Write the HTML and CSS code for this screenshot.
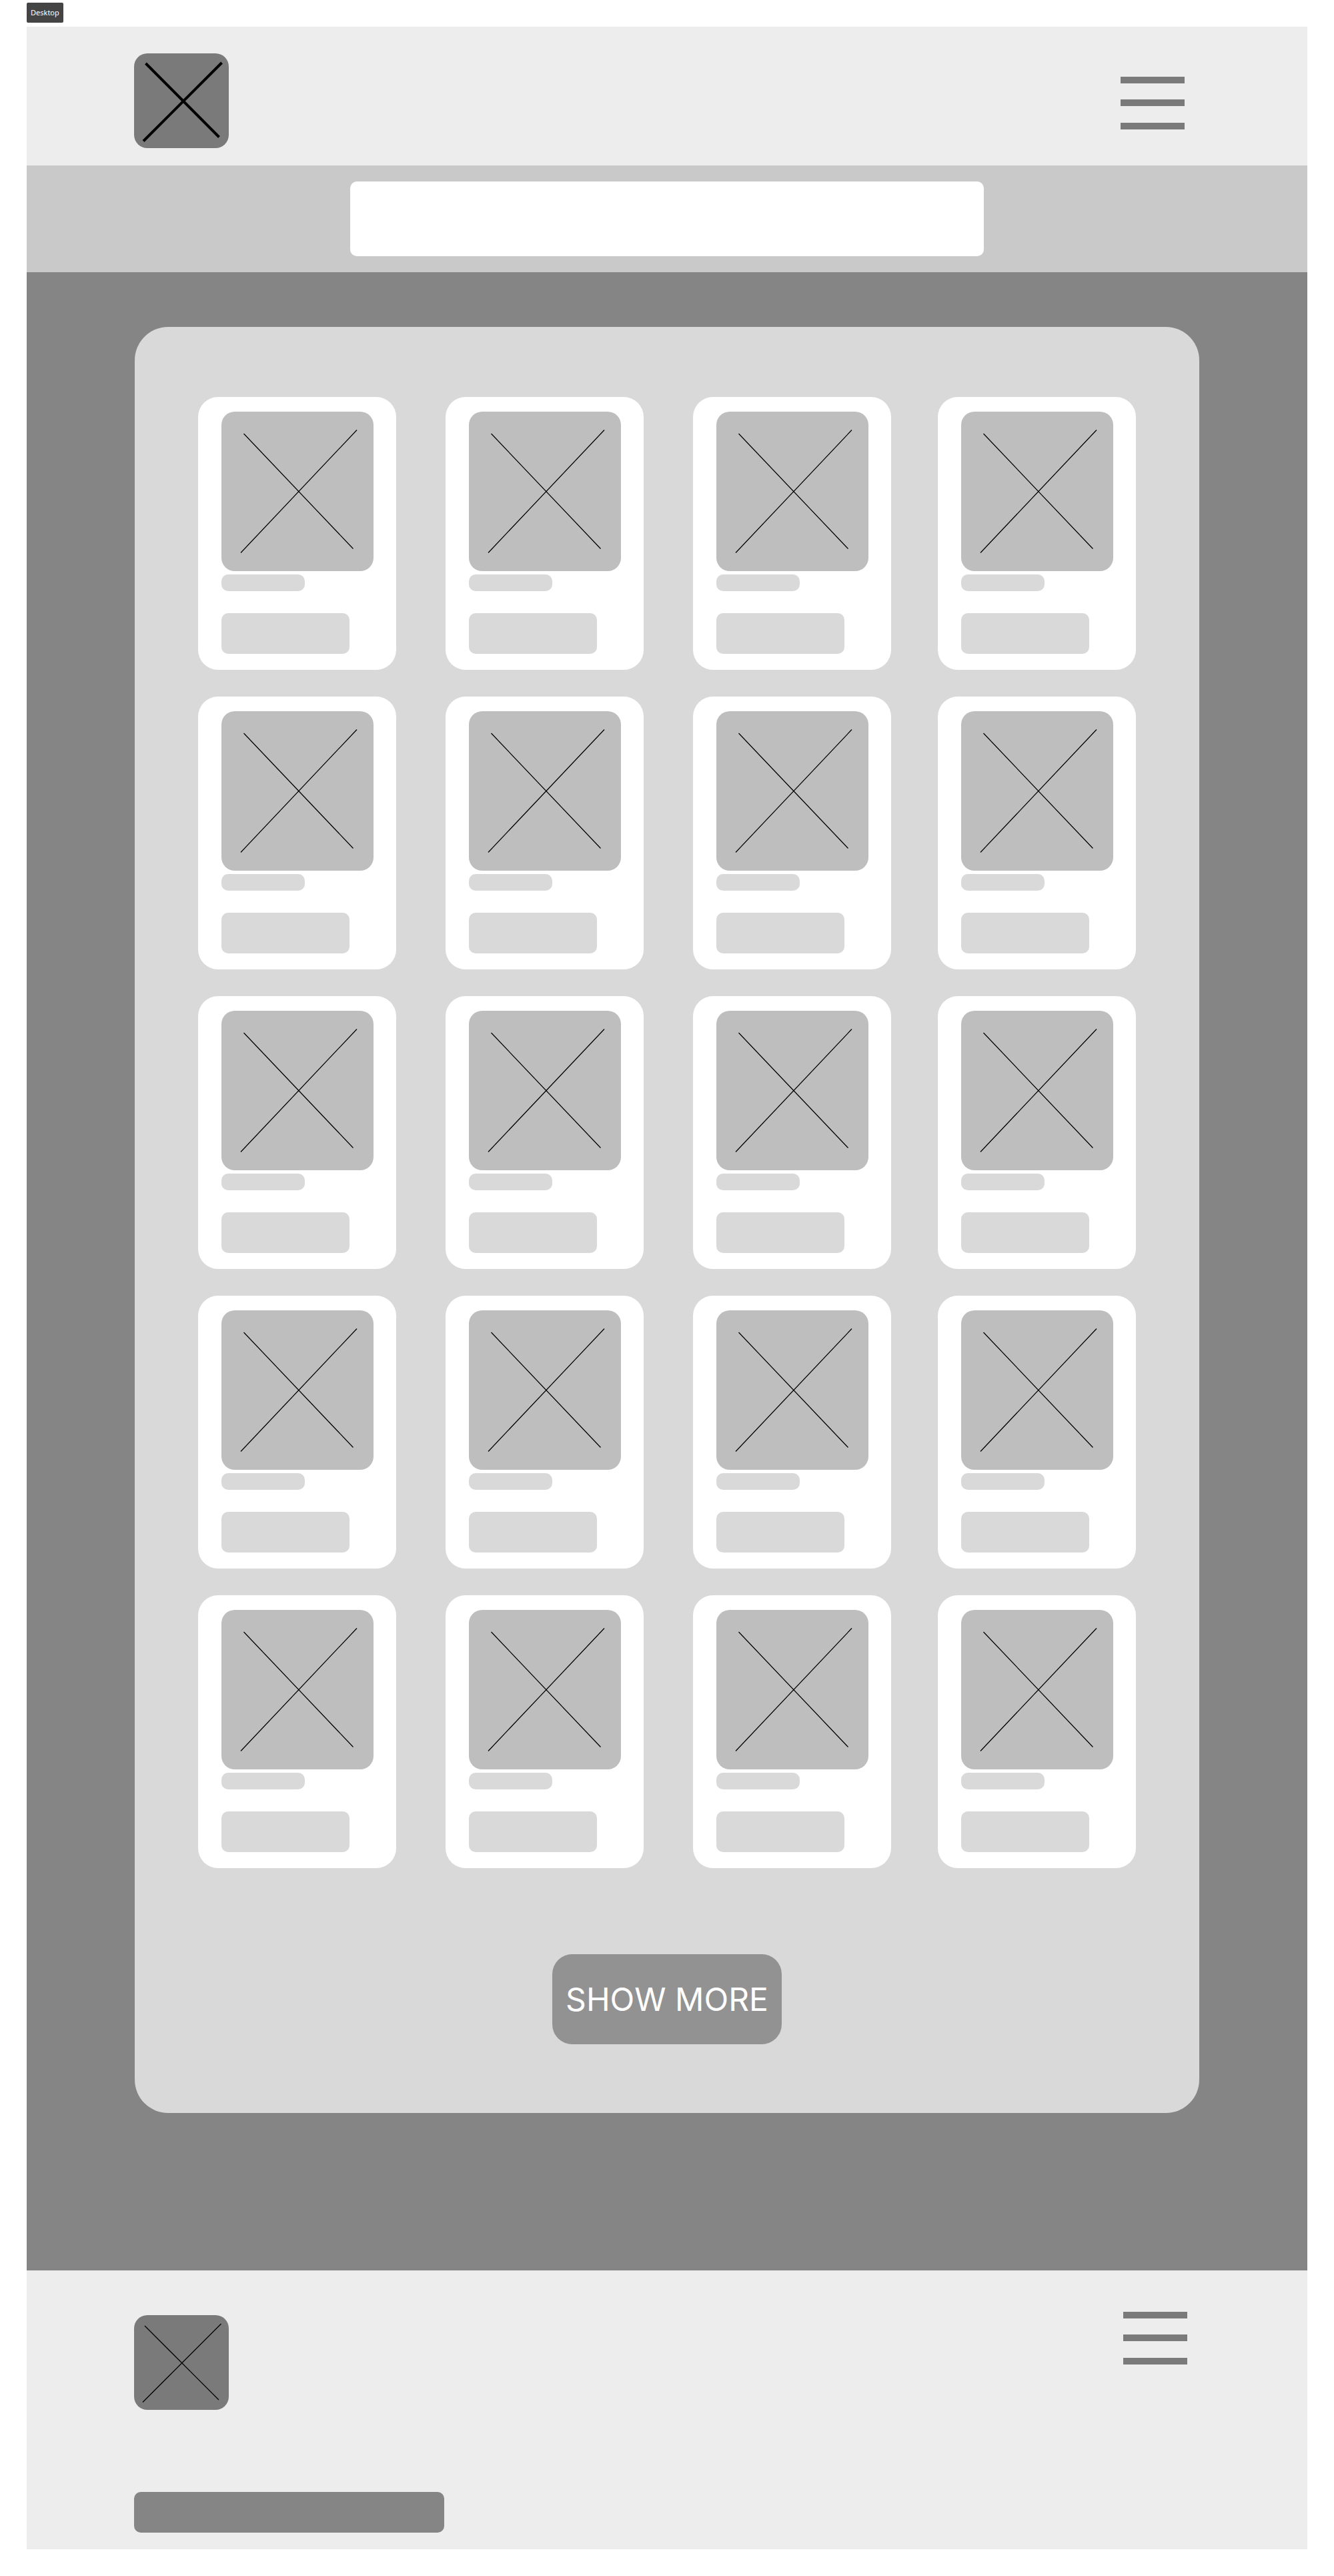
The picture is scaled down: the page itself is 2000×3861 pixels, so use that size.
FILE: index.html
```html
<!DOCTYPE html>
<html lang="en">
<head>
<meta charset="utf-8">
<meta name="viewport" content="width=device-width, initial-scale=1">
<title>Desktop</title>
<link rel="stylesheet" href="styles.css">
</head>
<body>
<svg class="defs" aria-hidden="true">
  <symbol id="photo" viewBox="0 0 228 239">
    <path d="M33.5 33L197.500 205.500M29 211.500L203 27.500" stroke="#000" stroke-width="1.25"/>
  </symbol>
  <symbol id="menu" viewBox="0 0 96 79">
    <path d="M0 0h96v10H0zM0 34h96v10H0zM0 69h96v10H0z" fill="#7a7a7a"/>
  </symbol>
</svg>

<div class="frame-label">Desktop</div>

<div class="page">
  <header class="site-header">
    <a class="logo" href="#" aria-label="Home">
      <svg viewBox="0 0 142 142"><path d="M17.500 15L127.500 125.500M14 131.500L131.500 14" stroke="#000" stroke-width="4"/></svg>
    </a>
    <button class="menu" type="button" aria-label="Menu"><svg><use href="#menu"/></svg></button>
  </header>

  <form class="search" role="search">
    <input class="search-box" type="search" aria-label="Search">
  </form>

  <main class="content">
    <section class="panel">
      <div class="grid">
        <article class="card"><svg class="photo"><use href="#photo"/></svg><span class="name"></span><button class="action" type="button" aria-label="View"></button></article>
        <article class="card"><svg class="photo"><use href="#photo"/></svg><span class="name"></span><button class="action" type="button" aria-label="View"></button></article>
        <article class="card"><svg class="photo"><use href="#photo"/></svg><span class="name"></span><button class="action" type="button" aria-label="View"></button></article>
        <article class="card"><svg class="photo"><use href="#photo"/></svg><span class="name"></span><button class="action" type="button" aria-label="View"></button></article>

        <article class="card"><svg class="photo"><use href="#photo"/></svg><span class="name"></span><button class="action" type="button" aria-label="View"></button></article>
        <article class="card"><svg class="photo"><use href="#photo"/></svg><span class="name"></span><button class="action" type="button" aria-label="View"></button></article>
        <article class="card"><svg class="photo"><use href="#photo"/></svg><span class="name"></span><button class="action" type="button" aria-label="View"></button></article>
        <article class="card"><svg class="photo"><use href="#photo"/></svg><span class="name"></span><button class="action" type="button" aria-label="View"></button></article>

        <article class="card"><svg class="photo"><use href="#photo"/></svg><span class="name"></span><button class="action" type="button" aria-label="View"></button></article>
        <article class="card"><svg class="photo"><use href="#photo"/></svg><span class="name"></span><button class="action" type="button" aria-label="View"></button></article>
        <article class="card"><svg class="photo"><use href="#photo"/></svg><span class="name"></span><button class="action" type="button" aria-label="View"></button></article>
        <article class="card"><svg class="photo"><use href="#photo"/></svg><span class="name"></span><button class="action" type="button" aria-label="View"></button></article>

        <article class="card"><svg class="photo"><use href="#photo"/></svg><span class="name"></span><button class="action" type="button" aria-label="View"></button></article>
        <article class="card"><svg class="photo"><use href="#photo"/></svg><span class="name"></span><button class="action" type="button" aria-label="View"></button></article>
        <article class="card"><svg class="photo"><use href="#photo"/></svg><span class="name"></span><button class="action" type="button" aria-label="View"></button></article>
        <article class="card"><svg class="photo"><use href="#photo"/></svg><span class="name"></span><button class="action" type="button" aria-label="View"></button></article>

        <article class="card"><svg class="photo"><use href="#photo"/></svg><span class="name"></span><button class="action" type="button" aria-label="View"></button></article>
        <article class="card"><svg class="photo"><use href="#photo"/></svg><span class="name"></span><button class="action" type="button" aria-label="View"></button></article>
        <article class="card"><svg class="photo"><use href="#photo"/></svg><span class="name"></span><button class="action" type="button" aria-label="View"></button></article>
        <article class="card"><svg class="photo"><use href="#photo"/></svg><span class="name"></span><button class="action" type="button" aria-label="View"></button></article>
      </div>
      <button class="show-more" type="button">SHOW MORE</button>
    </section>
  </main>

  <footer class="site-footer">
    <div class="footer-row">
      <a class="logo" href="#" aria-label="Home">
        <svg viewBox="0 0 142 142"><path d="M16 16L127 127M13 130.500L130.500 13" stroke="#000" stroke-width="1.25"/></svg>
      </a>
      <button class="menu" type="button" aria-label="Footer menu"><svg><use href="#menu"/></svg></button>
    </div>
    <div class="footer-bar"></div>
  </footer>
</div>
</body>
</html>
```

FILE: styles.css
```css
* {
  box-sizing: border-box;
}

body {
  margin: 0;
  padding: 4px 40px 40px;
  background: #fff;
  font-family: Inter, "Liberation Sans", sans-serif;
}

button {
  border: 0;
  padding: 0;
  cursor: pointer;
}

svg {
  display: block;
}

.defs {
  position: absolute;
  width: 0;
  height: 0;
}

.frame-label {
  width: fit-content;
  margin-bottom: 6px;
  padding: 0 6px;
  border-radius: 2px;
  background: #444;
  color: #fff;
  font: 11px/30px "Noto Sans", sans-serif;
}

.site-header {
  display: flex;
  justify-content: space-between;
  align-items: flex-start;
  padding: 40px 184px 26px 161px;
  background: #ededed;
}

.logo {
  width: 142px;
  height: 142px;
  border-radius: 20px;
  background: #7a7a7a;
}

.menu {
  background: none;
}

.menu svg {
  width: 96px;
  height: 79px;
}

.site-header .menu {
  margin-top: 35px;
}

.search {
  display: flex;
  justify-content: center;
  padding: 24px;
  background: #c9c9c9;
}

.search-box {
  width: 100%;
  max-width: 950px;
  height: 112px;
  padding: 0 32px;
  border: 0;
  border-radius: 10px;
  background: #fff;
  font: 48px Inter, "Liberation Sans", sans-serif;
}

.content {
  padding: 82px 162px 236px;
  background: #858585;
}

.panel {
  padding: 105px 95px 103px;
  border-radius: 50px;
  background: #d9d9d9;
}

.grid {
  display: grid;
  grid-template-columns: 371fr 371fr 367fr 297fr;
  row-gap: 40px;
}

.card {
  display: flex;
  flex-direction: column;
  align-items: flex-start;
  width: 297px;
  padding: 22px 34px 24px 35px;
  border-radius: 30px;
  background: #fff;
}

.photo {
  width: 100%;
  height: 239px;
  border-radius: 20px;
  background: #bebebe;
}

.name {
  width: 125px;
  height: 25px;
  margin: 5px 0 33px;
  border-radius: 10px;
  background: #d9d9d9;
}

.action {
  width: 192px;
  height: 61px;
  border-radius: 10px;
  background: #d9d9d9;
}

.show-more {
  display: block;
  width: 344px;
  height: 135px;
  margin: 129px auto 0;
  border-radius: 30px;
  background: #929292;
  color: #fff;
  font: 400 48px/58px Inter, "Liberation Sans", sans-serif;
  white-space: nowrap;
}

.site-footer {
  padding: 62px 180px 25px 161px;
  background: #ededed;
}

.footer-row {
  display: flex;
  justify-content: space-between;
  align-items: flex-start;
}

.site-footer .logo {
  margin-top: 5px;
}

.footer-bar {
  max-width: 465px;
  height: 61px;
  margin-top: 123px;
  border-radius: 10px;
  background: #858585;
}

@media (max-width: 1800px) {
  .grid {
    grid-template-columns: repeat(auto-fit, 297px);
    justify-content: center;
    column-gap: 40px;
  }
}

@media (max-width: 1000px) {
  body {
    padding-left: 0;
    padding-right: 0;
  }

  .content {
    padding-left: 24px;
    padding-right: 24px;
  }

  .panel {
    padding-left: 12px;
    padding-right: 12px;
  }

  .site-header,
  .site-footer {
    padding-left: 24px;
    padding-right: 24px;
  }

  .show-more {
    width: 100%;
    max-width: 344px;
  }
}
```
